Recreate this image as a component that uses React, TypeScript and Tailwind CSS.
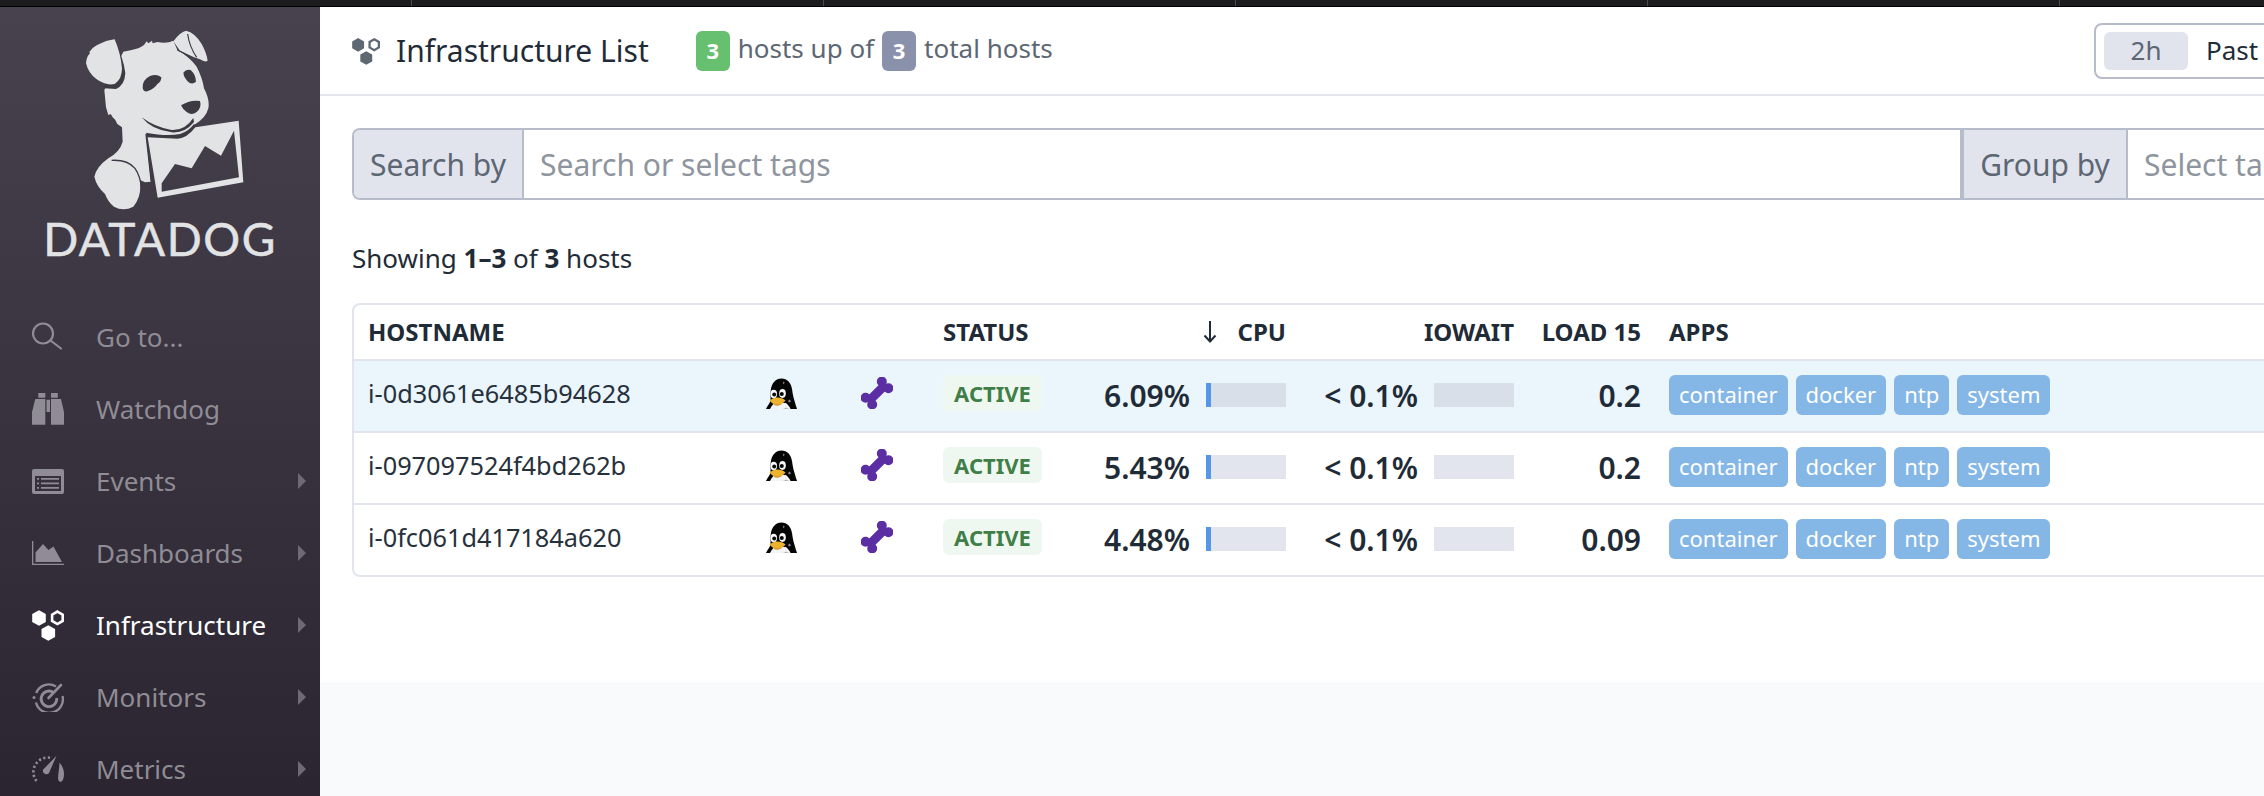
import React from "react";

const HexIcon = ({ className }: { className?: string }) => (
  <svg viewBox="0 0 32 32" className={className} fill="currentColor">
    <path d="M7 1.2l6.8 3.9v7.8L7 16.8.2 12.9V5.1z" />
    <path d="M25.4 2.6l5.3 3.1v6.2l-5.3 3.1-5.3-3.1V5.700z" fill="none" stroke="currentColor" strokeWidth="2.6" />
    <path d="M16.300 16.200l6.800 3.900v7.800l-6.800 3.900-6.800-3.900v-7.800z" />
  </svg>
);

const SearchIcon = () => (
  <svg viewBox="0 0 32 32" className="h-8 w-8" fill="none" stroke="currentColor" strokeWidth="2.2">
    <circle cx="11" cy="12.500" r="10" />
    <path d="M18.500 19.500 29 27.500" strokeLinecap="round" />
  </svg>
);

const BinocularsIcon = () => (
  <svg viewBox="0 0 32 32" className="h-8 w-8" fill="currentColor">
    <path d="M6.300 0h7v4.700h-7zM19 0h6.800v4.700H19zM3.300 6h10v25.700H0V19zM19 6h10l3 13v12.700H19zM14.500 6.700h3.500V19h-3.500z" />
  </svg>
);

const EventsIcon = () => (
  <svg viewBox="0 0 32 25" className="h-[25px] w-8" fill="currentColor">
    <path
      fillRule="evenodd"
      d="M2 0h28a2 2 0 0 1 2 2v21a2 2 0 0 1-2 2H2a2 2 0 0 1-2-2V2a2 2 0 0 1 2-2zm1 7v15h26V7z"
    />
    <path d="M5 9h2v1.800H5zM9 9h18v1.800H9zM5 13.500h2v1.800H5zM9 13.500h18v1.800H9zM5 18h2v1.800H5zM9 18h18v1.800H9z" />
  </svg>
);

const DashboardsIcon = () => (
  <svg viewBox="0 0 32 24" className="h-6 w-8" fill="currentColor">
    <path d="M0 0h1.300v22.700H32V24H0z" />
    <path d="M3.500 21v-9.500L11 3l5.500 6 5-3.500L30 21z" />
  </svg>
);

const MonitorsIcon = () => (
  <svg viewBox="0 0 32 30" className="h-[30px] w-8" fill="none" stroke="currentColor" strokeWidth="2.4">
    <path d="M24 4.500A13.500 13.500 0 0 0 4.200 11" />
    <path d="M4 20.500A13.500 13.500 0 0 0 30.500 14" />
    <path d="M21.500 10.500A7.800 7.800 0 1 0 24.700 16" strokeWidth="2.800" />
    <path d="M16.500 16 29 3" strokeWidth="2.600" strokeLinecap="round" />
    <circle cx="2" cy="15.500" r="1.500" fill="currentColor" stroke="none" />
  </svg>
);

const MetricsIcon = () => (
  <svg viewBox="0 0 32 28" className="h-7 w-8" fill="currentColor">
    <path
      d="M4.500 26A14.500 14.500 0 0 1 18 2.700"
      fill="none"
      stroke="currentColor"
      strokeWidth="2.600"
      strokeDasharray="2.200 2.400"
    />
    <path d="M24.500 0.800 17 18a3.500 3.500 0 0 1-6-3.200z" />
    <path d="M27.500 7.500c3 3.500 4.500 7.500 4.500 11.500 0 3.500-1 7.500-3.200 7.700-2 .2-2.800-1.700-2.700-3.700.2-5 1.200-10 1.400-15.500z" />
  </svg>
);

const DogLogo = () => (
  <svg viewBox="0 0 690 570" className="ml-10 block h-[190px] w-[230px]">
    {/* head and body */}
    <path
      fill="#e2e3e5"
      d="M250 95 L275 90 Q300 85 312 75 L320 64 L325 70 L336 62 L338 70 L352 66 Q380 72 400 62 L412 90 Q450 112 470 140 Q488 175 492 205 Q510 240 505 265 Q498 295 462 315 L440 345 L318 345 L333 485 L315 487 L300 480 Q306 530 280 560 Q250 575 222 560 Q205 548 195 522 Q170 500 163 470 Q170 440 205 415 Q240 395 248 365 L246 322 L232 312 L226 300 L218 292 L212 282 L205 285 L198 262 L193 210z"
    />
    {/* left ear */}
    <path fill="#3e3a44" d="M224 66 Q250 110 256 160 Q254 196 228 207 L192 205 L196 190 L230 170z" />
    <path
      fill="#e2e3e5"
      d="M138 130 Q140 108 150 100 L148 96 Q158 82 170 76 Q200 60 224 58 Q242 100 246 145 Q246 178 224 192 Q198 198 170 178 Q145 160 138 130z"
    />
    {/* right ear */}
    <path
      fill="#e2e3e5"
      d="M400 64 Q420 36 438 32 Q465 38 485 72 Q500 100 503 122 Q495 128 480 118 L462 112 L420 92z"
    />
    <path fill="none" stroke="#3e3a44" strokeWidth="3.500" d="M443 42 Q448 80 470 112" />
    <path fill="none" stroke="#3e3a44" strokeWidth="3.500" d="M412 90 Q432 98 452 114" />
    {/* face */}
    <path fill="#3e3a44" d="M308 204 Q306 180 330 168 Q350 160 364 172 Q364 186 352 192 Q342 208 322 214 Q310 216 308 204z" />
    <path fill="#3e3a44" d="M430 158 Q438 146 452 150 Q468 165 468 185 Q458 194 448 188 Q432 175 430 158z" />
    <path fill="#3e3a44" d="M423 256 Q450 238 480 243 Q486 262 470 276 Q455 288 440 276 Q428 268 423 256z" />
    <path fill="#3e3a44" d="M305 292 Q345 322 395 330 Q435 332 460 294 L462 306 Q435 340 395 337 Q335 330 305 292z" />
    {/* paper */}
    <path fill="none" stroke="#3e3a44" strokeWidth="4" d="M318 342 L334 487" />
    <path fill="#3e3a44" d="M318 338 Q380 350 420 342 Q445 335 462 312 L470 322 Q440 358 412 358 L322 352z" />
    <path
      fill="#e2e3e5"
      fillRule="evenodd"
      d="M323 352 L412 356 Q440 356 466 322 L596 302 L610 487 L353 533z M365 515 L597 472 L582 332 L543 407 L495 378 L455 445 L405 432 L365 490z"
    />
    {/* paw line */}
    <path fill="none" stroke="#3e3a44" strokeWidth="4" d="M215 421 Q262 418 285 445 Q302 470 304 505" />
  </svg>
);

const PenguinIcon = () => (
  <svg viewBox="0 0 32 32" className="mt-[17px] h-8 w-8 self-start">
    <path
      fill="#050505"
      d="M1 31c1.500-3.500 4-5.500 4.500-9 .3-3-.5-6 .3-10 .8-7 5-11.500 10.500-11.500 6 0 10 4.500 10.800 11 .5 4 1.500 9 2.900 13 .5 2.500 1.500 4.500 2 6.500z"
    />
    <path fill="#f4f4f4" d="M5 31c1.500-3 3-4.500 4-6h12c2 2 4 4 4.500 6z" />
    <path fill="#b8b8b8" d="M21 29.500l3 1.500h-6z" />
    <ellipse cx="8.700" cy="16" rx="3.300" ry="4.200" fill="#f8f8f8" />
    <ellipse cx="17.500" cy="15.500" rx="3.300" ry="4.400" fill="#f8f8f8" />
    <circle cx="9.200" cy="16.500" r="1.900" fill="#050505" />
    <circle cx="16.800" cy="16" r="2" fill="#050505" />
    <path fill="#eeb32e" d="M4.500 22.500c2.500-2 5-2.800 7.500-3 3-.2 6.500.8 8.500 3-1.500 2-4.500 4.500-8 4.800-3.300 0-6-2.400-8-4.800z" />
    <path fill="#b98a1e" d="M8 26c3 .8 6 .8 9 0-1.500 1-3.500 1.600-5 1.600-1.500 0-3-.6-4-1.600z" />
    <path fill="#8a8a8a" d="M24 21.500l2 1.500-1 1.500-2-1z" />
    <path fill="#777" d="M18 3.500l1.500.8-.5 2-1-.5z" />
  </svg>
);

const BoneIcon = () => (
  <svg viewBox="0 0 32 32" className="mt-4 h-8 w-8 self-start" fill="#5b2fa3">
    <g transform="rotate(-45 16 16)">
      <rect x="3" y="11.500" width="26" height="9" />
      <circle cx="4.500" cy="11.300" r="5" />
      <circle cx="4.500" cy="20.700" r="5" />
      <circle cx="27.500" cy="11.300" r="5" />
      <circle cx="27.500" cy="20.700" r="5" />
    </g>
  </svg>
);

const navItems = [
  { label: "Go to...", icon: <SearchIcon />, arrow: false, active: false },
  { label: "Watchdog", icon: <BinocularsIcon />, arrow: false, active: false },
  { label: "Events", icon: <EventsIcon />, arrow: true, active: false },
  { label: "Dashboards", icon: <DashboardsIcon />, arrow: true, active: false },
  { label: "Infrastructure", icon: <HexIcon className="h-8 w-8" />, arrow: true, active: true },
  { label: "Monitors", icon: <MonitorsIcon />, arrow: true, active: false },
  { label: "Metrics", icon: <MetricsIcon />, arrow: true, active: false },
];

const hosts = [
  { name: "i-0d3061e6485b94628", cpu: "6.09%", load: "0.2", highlighted: true },
  { name: "i-097097524f4bd262b", cpu: "5.43%", load: "0.2", highlighted: false },
  { name: "i-0fc061d417184a620", cpu: "4.48%", load: "0.09", highlighted: false },
];

const apps = ["container", "docker", "ntp", "system"];

const columns = "grid grid-cols-[411px_96px_82px_140px_123px_80px_148px_80px_127px_1fr]";

const Sidebar = () => (
  <aside className="flex w-[320px] shrink-0 flex-col bg-gradient-to-b from-[#47424e] to-[#2a2530]">
    <div className="pt-[13px]">
      <DogLogo />
      <div className="mt-[9px] text-center font-['Lato',sans-serif] text-[46px] leading-[40px] tracking-[1.6px] text-[#e2e3e5] [-webkit-text-stroke:0.5px_#e2e3e5]">
        DATADOG
      </div>
    </div>
    <nav className="mt-[42px]">
      {navItems.map((item) => (
        <div
          key={item.label}
          className={`flex h-[72px] items-center pl-8 pr-[14px] text-[26px] ${
            item.active ? "text-white" : "text-[#8f8c95]"
          }`}
        >
          <div className="flex w-8 justify-center">{item.icon}</div>
          <span className="ml-8 flex-1">{item.label}</span>
          {item.arrow && (
            <span className="h-0 w-0 border-y-[8px] border-l-[8px] border-y-transparent border-l-[#6e6a74]" />
          )}
        </div>
      ))}
    </nav>
  </aside>
);

const Header = () => (
  <header className="flex h-[89px] items-center justify-between border-b-2 border-[#e2e5ed] pl-8 pr-0">
    <div className="flex items-center">
      <HexIcon className="h-7 w-7 text-[#5f6773]" />
      <h1 className="ml-4 text-[30px] text-[#1f2b36]">Infrastructure List</h1>
      <div className="ml-[47px] flex items-center text-[26px] text-[#5d6773]">
        <span className="flex h-10 w-[34px] items-center justify-center rounded-md bg-[#67c06f] text-[22px] font-bold text-white">
          3
        </span>
        <span className="-mt-1 ml-2">hosts up of</span>
        <span className="ml-2 flex h-10 w-[34px] items-center justify-center rounded-md bg-[#8a91ab] text-[22px] font-bold text-white">
          3
        </span>
        <span className="-mt-1 ml-2">total hosts</span>
      </div>
    </div>
    <div className="-mr-[300px] flex h-14 w-[470px] items-center rounded-lg border-2 border-[#b7bccb] pl-2 text-[26px]">
      <span className="flex h-[38px] w-[84px] items-center justify-center rounded-md bg-[#e1e4ed] text-[#5d6773]">
        2h
      </span>
      <span className="ml-[18px] text-[#1f2b36]">Past</span>
    </div>
  </header>
);

const SearchBar = () => (
  <div className="mt-8 flex h-[72px] w-[2100px] text-[30px]">
    <div className="flex w-[1608px] shrink-0 rounded-l-lg border-2 border-r-0 border-[#b7bccb]">
      <div className="flex w-[170px] items-center justify-center rounded-l-md border-r-2 border-[#b7bccb] bg-[#e1e4ed] text-[#5d6773]">
        Search by
      </div>
      <div className="flex flex-1 items-center pl-4 text-[#8e959e]">Search or select tags</div>
    </div>
    <div className="flex flex-1 border-y-2 border-l-4 border-[#b7bccb]">
      <div className="flex w-[164px] items-center justify-center border-r-2 border-[#b7bccb] bg-[#e1e4ed] text-[#5d6773]">
        Group by
      </div>
      <div className="flex flex-1 items-center pl-4 text-[#8e959e]">Select tags</div>
    </div>
  </div>
);

const HostRow = ({ host }: { host: (typeof hosts)[number] }) => (
  <div
    className={`${columns} h-[72px] items-center border-b-2 border-[#e2e5ed] pb-[2px] font-normal ${
      host.highlighted ? "bg-[#eaf5fc]" : ""
    }`}
  >
    <div className="-mt-[2px] pl-[14px] text-[25.3px] text-[#26313c]">{host.name}</div>
    <PenguinIcon />
    <BoneIcon />
    <div className="mt-[14px] self-start">
      <span className="flex h-9 w-[99px] items-center justify-center rounded-md bg-[#eff8f0] pt-px text-[22px] font-bold text-[#3f7e47]">
        ACTIVE
      </span>
    </div>
    <div className="pr-4 text-right text-[30px] font-semibold text-[#1f2b36]">{host.cpu}</div>
    <div className={`h-6 ${host.highlighted ? "bg-[#d8dfe9]" : "bg-[#e2e5ed]"}`}>
      <div className="h-full w-[5px] bg-[#5596e6]" />
    </div>
    <div className="pr-4 text-right text-[30px] font-semibold text-[#1f2b36]">&lt; 0.1%</div>
    <div className={`h-6 ${host.highlighted ? "bg-[#d8dfe9]" : "bg-[#e2e5ed]"}`} />
    <div className="text-right text-[30px] font-semibold text-[#1f2b36]">{host.load}</div>
    <div className="flex gap-2 pl-7">
      {apps.map((app) => (
        <span
          key={app}
          className="flex h-10 items-center rounded-md bg-[#84b6e6] px-[10px] pb-[2px] text-[22px] text-white"
        >
          {app}
        </span>
      ))}
    </div>
  </div>
);

const HostTable = () => (
  <div className="mt-[26px] w-[2100px] rounded-l-lg border-y-2 border-l-2 border-[#e2e5ed] text-[24px] font-bold text-[#1f2b36] [&>*:last-child]:h-[70px] [&>*:last-child]:border-b-0">
    <div className={`${columns} h-14 items-center border-b-2 border-[#e2e5ed]`}>
      <div className="col-span-3 pl-[14px]">HOSTNAME</div>
      <div>STATUS</div>
      <div />
      <div className="-ml-[3px] flex items-center justify-between">
        <svg viewBox="0 0 14 22" className="h-[22px] w-[14px]" fill="none" stroke="#1f2b36" strokeWidth="2">
          <path d="M7 0v20M1.500 14.500 7 20.500l5.500-6" />
        </svg>
        <span>CPU</span>
      </div>
      <div className="col-span-2 text-right">IOWAIT</div>
      <div className="text-right">LOAD 15</div>
      <div className="pl-7">APPS</div>
    </div>
    {hosts.map((host) => (
      <HostRow key={host.name} host={host} />
    ))}
  </div>
);

export default function App() {
  return (
    <div className="flex h-[796px] w-[2264px] flex-col overflow-hidden bg-[#f9fafc] font-['Noto_Sans',sans-serif]">
      <div className="flex h-[7px] shrink-0 border-b border-black bg-[#1c1c1e]">
        {[0, 1, 2, 3, 4].map((i) => (
          <div key={i} className="h-full w-[412px] border-r border-[#4a4a4c]" />
        ))}
      </div>
      <div className="flex min-h-0 flex-1">
        <Sidebar />
        <main className="min-w-0 flex-1 overflow-hidden">
          <div className="h-[675px] bg-white">
            <Header />
            <div className="pl-8">
              <SearchBar />
              <p className="mb-px mt-[39px] h-[38px] text-[26px] leading-[38px] text-[#1f2b36]">
                Showing <b className="font-bold">1–3</b> of <b className="font-bold">3</b> hosts
              </p>
              <HostTable />
            </div>
          </div>
        </main>
      </div>
    </div>
  );
}
